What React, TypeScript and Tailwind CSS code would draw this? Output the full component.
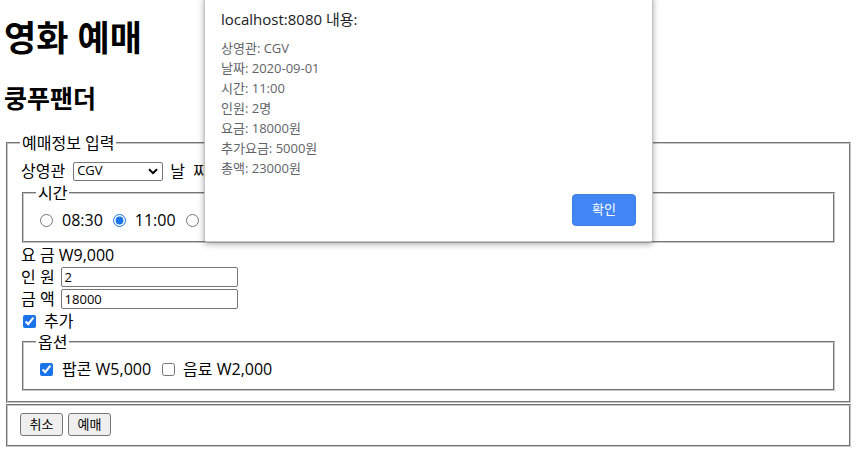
import React from "react";

const fieldsetCls =
  "border-2 [border-style:groove] border-[#c8c8c8] px-[12px] min-w-0";
const legendCls = "px-[2px] text-[16px] leading-[20px]";

const Radio: React.FC<{ checked?: boolean; className?: string }> = ({ checked, className }) => (
  <input
    type="radio"
    name="time"
    defaultChecked={checked}
    className={`m-0 h-[13px] w-[13px] shrink-0 accent-[#1a73e8] ${className ?? ""}`}
  />
);

const Check: React.FC<{ checked?: boolean; className?: string }> = ({ checked, className }) => (
  <input
    type="checkbox"
    defaultChecked={checked}
    className={`m-0 h-[13px] w-[13px] shrink-0 accent-[#1a73e8] ${className ?? ""}`}
  />
);

const alertLines = [
  "상영관: CGV",
  "날짜: 2020-09-01",
  "시간: 11:00",
  "인원: 2명",
  "요금: 18000원",
  "추가요금: 5000원",
  "총액: 23000원",
];

export default function App() {
  return (
    <div
      className="relative h-[473px] w-[856px] overflow-hidden bg-white text-[16px] text-black"
      style={{ fontFamily: '"Open Sans", "Noto Sans CJK KR", sans-serif' }}
    >
      <h1 className="ml-[4px] mt-[18px] text-[35px] font-bold leading-[40px]">영화 예매</h1>
      <h2 className="ml-[4px] mt-[25px] text-[25px] font-bold leading-[30px]">쿵푸팬더</h2>

      <fieldset className={`${fieldsetCls} ml-[6px] mt-[20px] w-[845px] pb-[10px]`}>
        <legend className={legendCls}>예매정보 입력</legend>

        <div className="mt-[7px] flex h-[22px] items-center whitespace-nowrap">
          <span className="ml-[1px]">상영관</span>
          <div className="relative ml-[8px] flex h-[19px] w-[90px] items-center rounded-[2px] border border-[#767676] pl-[3px] text-[13px]">
            CGV
            <svg className="absolute right-[4px] top-[5px]" width="10" height="7" viewBox="0 0 10 7">
              <path d="M1 1.2 L5 5.2 L9 1.2" fill="none" stroke="#000" strokeWidth="2" />
            </svg>
          </div>
          <span className="ml-[7px]">날&nbsp; 짜</span>
        </div>

        <fieldset className={`${fieldsetCls} mx-[2px] mt-[1px] pb-[10px]`}>
          <legend className={legendCls}>시간</legend>
          <div className="mt-[6px] flex h-[22px] items-center whitespace-nowrap">
            <Radio className="ml-[4px]" />
            <span className="ml-[9px]">08:30</span>
            <Radio checked className="ml-[10px]" />
            <span className="ml-[9px]">11:00</span>
            <Radio className="ml-[10px]" />
            <span className="ml-[8px]">14:30</span>
          </div>
        </fieldset>

        <div className="mt-[1px] flex h-[22px] items-center whitespace-nowrap">
          <span className="ml-[1px]">요 금 W9,000</span>
        </div>
        <div className="flex h-[21px] items-center whitespace-nowrap">
          <span className="ml-[1px]">인 원</span>
          <input
            defaultValue="2"
            className="ml-[6px] h-[20px] w-[177px] rounded-[2px] border border-[#767676] px-[3px] text-[13px] outline-none"
          />
        </div>
        <div className="flex h-[23px] items-center whitespace-nowrap">
          <span className="ml-[1px]">금 액</span>
          <input
            defaultValue="18000"
            className="ml-[6px] h-[20px] w-[177px] rounded-[2px] border border-[#767676] px-[3px] text-[13px] outline-none"
          />
        </div>
        <div className="flex h-[22px] items-center whitespace-nowrap">
          <Check checked className="ml-[3px]" />
          <span className="ml-[8px]">추가</span>
        </div>

        <fieldset className={`${fieldsetCls} mx-[2px] pb-[9px]`}>
          <legend className={legendCls}>옵션</legend>
          <div className="mt-[6px] flex h-[22px] items-center whitespace-nowrap">
            <Check checked className="ml-[4px]" />
            <span className="ml-[9px]">팝콘 W5,000</span>
            <Check className="ml-[11px]" />
            <span className="ml-[8px]">음료 W2,000</span>
          </div>
        </fieldset>
      </fieldset>

      <fieldset className={`${fieldsetCls} ml-[6px] mt-[1px] w-[845px] pb-[9px] pt-[7px]`}>
        <div className="flex gap-[5px]">
          <button className="h-[23px] w-[43px] rounded-[3px] border border-[#767676] bg-[#efefef] text-[13px] leading-none">
            취소
          </button>
          <button className="h-[23px] w-[43px] rounded-[3px] border border-[#767676] bg-[#efefef] text-[13px] leading-none">
            예매
          </button>
        </div>
      </fieldset>

      {/* alert dialog */}
      <div className="absolute left-[204px] top-[-4px] flex h-[246px] w-[449px] flex-col rounded-b-[2px] border border-[#c4c4c4] bg-white px-[16px] shadow-[0_2px_6px_rgba(0,0,0,0.35)]">
        <div className="mt-[12px] text-[15px] leading-[20px] text-[#202124]">localhost:8080 내용:</div>
        <div className="mt-[9px] flex flex-col text-[13px] leading-[20px] text-[#5f6368]">
          {alertLines.map((l) => (
            <div key={l}>{l}</div>
          ))}
        </div>
        <div className="mt-[16px] flex justify-end">
          <button className="h-[32px] w-[64px] rounded-[4px] border border-[#3b7de0] bg-[#4285f4] text-[13px] text-white">
            확인
          </button>
        </div>
      </div>
    </div>
  );
}
